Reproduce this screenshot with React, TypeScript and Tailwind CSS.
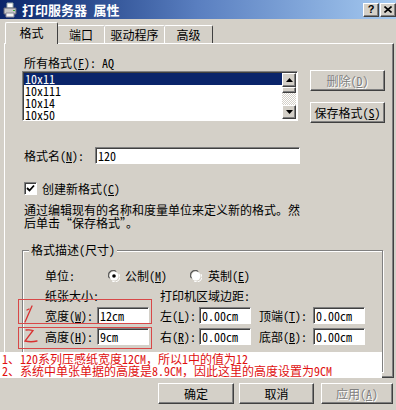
import React from "react";

const raised =
  "border border-t-white border-l-white border-r-[#404040] border-b-[#404040] shadow-[inset_-1px_-1px_0_#808080] bg-[#d4d0c8]";
const sunken =
  "border border-t-[#808080] border-l-[#808080] border-r-white border-b-white shadow-[inset_1px_1px_0_#404040] bg-white";
const disabledText = "text-[#808080] [text-shadow:1px_1px_0_#fff]";

const Radio = ({ checked }: { checked?: boolean }) => (
  <svg width="12" height="12" viewBox="0 0 12 12" className="shrink-0">
    <path d="M1 8 A5 5 0 0 1 8 1" stroke="#808080" fill="none" />
    <path d="M2 8.5 A4.2 4.2 0 0 1 8.5 2" stroke="#404040" fill="none" />
    <circle cx="6" cy="6" r="4.5" fill="#fff" />
    <path d="M11 4 A5 5 0 0 1 4 11" stroke="#fff" fill="none" />
    {checked && <circle cx="6" cy="6" r="1.8" fill="#000" />}
  </svg>
);

const Btn = ({ children, className = "", disabled = false }: { children: React.ReactNode; className?: string; disabled?: boolean }) => (
  <div className={`${raised} h-[21px] flex items-center justify-center leading-[12px] ${disabled ? disabledText : ""} ${className}`}>
    {children}
  </div>
);

const Field = ({ value, className = "" }: { value: string; className?: string }) => (
  <div className={`${sunken} h-[17px] flex items-center pl-[2px] leading-[12px] ${className}`}>{value}</div>
);

const Tab = ({ label, active = false, className = "" }: { label: string; active?: boolean; className?: string }) => (
  <div
    className={
      active
        ? `relative z-10 -mb-[1px] h-[22px] flex items-center justify-center bg-[#d4d0c8] border-t border-l border-t-white border-l-white border-r border-r-[#404040] rounded-t-[2px] pb-[1px] ${className}`
        : `h-[18px] flex items-center justify-center border-t border-l border-t-white border-l-white border-r border-r-[#404040] rounded-t-[2px] -ml-[1px] ${className}`
    }
  >
    {label}
  </div>
);

export default function App() {
  return (
    <div className="relative w-[396px] h-[410px] overflow-hidden bg-[#d4d0c8] text-[12px] text-black font-['Noto_Sans_Mono_CJK_SC','Noto_Sans_CJK_SC',sans-serif]">
      {/* title bar */}
      <div className="h-[19px] flex items-center bg-gradient-to-r from-[#0a246a] via-[#5a7fc0] to-[#a6caf0]">
        <svg width="16" height="16" viewBox="0 0 16 16" className="ml-[2px]">
          <path d="M5 1 h6 v5 h-6 z" fill="#fff" stroke="#9aa" />
          <path d="M2 6 h12 v6 h-12 z" fill="#c8c8c8" stroke="#667" />
          <path d="M4 11 h8 v4 h-8 z" fill="#f4f4f4" stroke="#889" />
          <rect x="11" y="8" width="2" height="1" fill="#3a3" />
        </svg>
        <span className="ml-[4px] text-white font-bold text-[13px] leading-[13px]">打印服务器 属性</span>
        <div className="ml-auto flex gap-[1px]">
          <div className={`${raised} w-[16px] h-[14px] flex items-center justify-center font-bold text-[11px] leading-[11px] font-['Liberation_Sans',sans-serif]`}>?</div>
          <div className={`${raised} w-[16px] h-[14px] flex items-center justify-center`}>
            <svg width="8" height="7" viewBox="0 0 8 7">
              <path d="M0.5 0.5 L7.5 6.5 M7.5 0.5 L0.5 6.5" stroke="#000" strokeWidth="1.6" />
            </svg>
          </div>
        </div>
      </div>

      {/* tabs */}
      <div className="mt-[3px] h-[21px] flex items-end pl-[5px]">
        <Tab label="格式" active className="w-[53px]" />
        <Tab label="端口" className="w-[48px]" />
        <Tab label="驱动程序" className="w-[61px]" />
        <Tab label="高级" className="w-[49px]" />
      </div>

      {/* panel */}
      <div className="ml-[4px] w-[390px] h-[335px] border border-t-white border-l-white border-r-[#404040] border-b-[#404040] shadow-[inset_-1px_-1px_0_#808080] pl-[19px] flex flex-col">
        <div className="mt-[12px] h-[14px] leading-[14px]">
          所有格式(<u>F</u>): AQ
        </div>
        <div className="flex items-start h-[53px]">
          <div className={`${sunken} -ml-[2px] mt-[1px] w-[276px] h-[50px] flex p-[1px]`}>
            <div className="flex-1 flex flex-col leading-[12px]">
              <div className="h-[12px] bg-[#0a246a] text-white pl-[1px]">10x11</div>
              <div className="h-[12px] pl-[1px]">10x111</div>
              <div className="h-[12px] pl-[1px]">10x14</div>
              <div className="h-[12px] pl-[1px]">10x50</div>
            </div>
            <div className="w-[14px] flex flex-col">
              <div className={`${raised} h-[14px] flex items-center justify-center`}>
                <svg width="7" height="4" viewBox="0 0 7 4"><path d="M3.5 0 L7 4 H0 z" fill="#000" /></svg>
              </div>
              <div className={`${raised} h-[6px]`} />
              <div className="flex-1 bg-[repeating-conic-gradient(#fff_0_25%,#d4d0c8_0_50%)] bg-[length:2px_2px]" />
              <div className={`${raised} h-[14px] flex items-center justify-center`}>
                <svg width="7" height="4" viewBox="0 0 7 4"><path d="M0 0 H7 L3.5 4 z" fill="#000" /></svg>
              </div>
            </div>
          </div>
          <div className="ml-[12px] flex flex-col">
            <Btn disabled className="w-[75px]">删除(<u>D</u>)</Btn>
            <Btn className="w-[75px] mt-[11px]">保存格式(<u>S</u>)</Btn>
          </div>
        </div>

        <div className="mt-[24px] h-[17px] flex items-center">
          <span className="w-[71px]">格式名(<u>N</u>):</span>
          <Field value="120" className="w-[205px]" />
        </div>

        <div className="mt-[18px] h-[13px] flex items-center">
          <div className={`${sunken} w-[13px] h-[13px] flex items-center justify-center`}>
            <svg width="9" height="9" viewBox="0 0 9 9">
              <path d="M1 4 L3.5 6.5 L8 1.5" stroke="#000" strokeWidth="1.8" fill="none" />
            </svg>
          </div>
          <span className="ml-[5px] leading-[13px]">创建新格式(<u>C</u>)</span>
        </div>

        <div className="mt-[8px] leading-[13px]">
          <div>通过编辑现有的名称和度量单位来定义新的格式。然</div>
          <div>后单击“保存格式”。</div>
        </div>

        {/* group box */}
        <div className="relative mt-[21px] -ml-[2px] w-[361px] h-[122px] border border-[#808080] shadow-[1px_1px_0_#fff,inset_1px_1px_0_#fff] pl-[22px] flex flex-col">
          <span className="absolute -top-[8px] left-[6px] px-[2px] bg-[#d4d0c8] leading-[14px]">格式描述(尺寸)</span>
          <div className="mt-[18px] h-[14px] flex items-center">
            <span className="w-[63px]">单位:</span>
            <Radio checked />
            <span className="ml-[5px] w-[65px]">公制(<u>M</u>)</span>
            <Radio />
            <span className="ml-[6px]">英制(<u>E</u>)</span>
          </div>
          <div className="mt-[6px] h-[14px] flex items-center">
            <span className="w-[115px]">纸张大小:</span>
            <span>打印机区域边距:</span>
          </div>
          <div className="mt-[4px] h-[17px] flex items-center">
            <span className="w-[52px]">宽度(<u>W</u>):</span>
            <Field value="12cm" className="w-[52px]" />
            <span className="ml-[11px] w-[39px]">左(<u>L</u>):</span>
            <Field value="0.00cm" className="w-[52px]" />
            <span className="ml-[8px] w-[54px]">顶端(<u>T</u>):</span>
            <Field value="0.00cm" className="w-[52px]" />
          </div>
          <div className="mt-[4px] h-[17px] flex items-center">
            <span className="w-[52px]">高度(<u>H</u>):</span>
            <Field value="9cm" className="w-[52px]" />
            <span className="ml-[11px] w-[39px]">右(<u>R</u>):</span>
            <Field value="0.00cm" className="w-[52px]" />
            <span className="ml-[8px] w-[54px]">底部(<u>B</u>):</span>
            <Field value="0.00cm" className="w-[52px]" />
          </div>
        </div>
      </div>

      {/* bottom buttons */}
      <div className="mt-[5px] flex">
        <Btn className="ml-[158px] w-[76px]">确定</Btn>
        <Btn className="ml-[5px] w-[75px]">取消</Btn>
        <Btn disabled className="ml-[7px] w-[72px]">应用(<u>A</u>)</Btn>
      </div>

      {/* red annotations over the dialog */}
      <div className="absolute left-[18px] top-[299px] w-[134px] h-[25px] border border-[#d84848]" />
      <div className="absolute left-[18px] top-[327px] w-[134px] h-[22px] border border-[#d84848]" />
      <svg className="absolute left-[20px] top-[304px]" width="18" height="44" viewBox="0 0 18 44">
        <path d="M12 2 L5 18 M9 5 L7 6" stroke="#d83030" strokeWidth="1.3" fill="none" strokeLinecap="round" />
        <path d="M6 26 Q10 25.5 13 26.5 L5 37 Q11 38.5 17 37" stroke="#d83030" strokeWidth="1.3" fill="none" strokeLinecap="round" />
      </svg>
      <div className="absolute left-0 top-[352px] w-[382px] h-[26px] bg-white text-[#e01010] leading-[12px] pt-[1px] pl-[2px]">
        <div>1、120系列压感纸宽度12CM，所以1中的值为12</div>
        <div>2、系统中单张单据的高度是8.9CM，因此这里的高度设置为9CM</div>
      </div>
    </div>
  );
}
